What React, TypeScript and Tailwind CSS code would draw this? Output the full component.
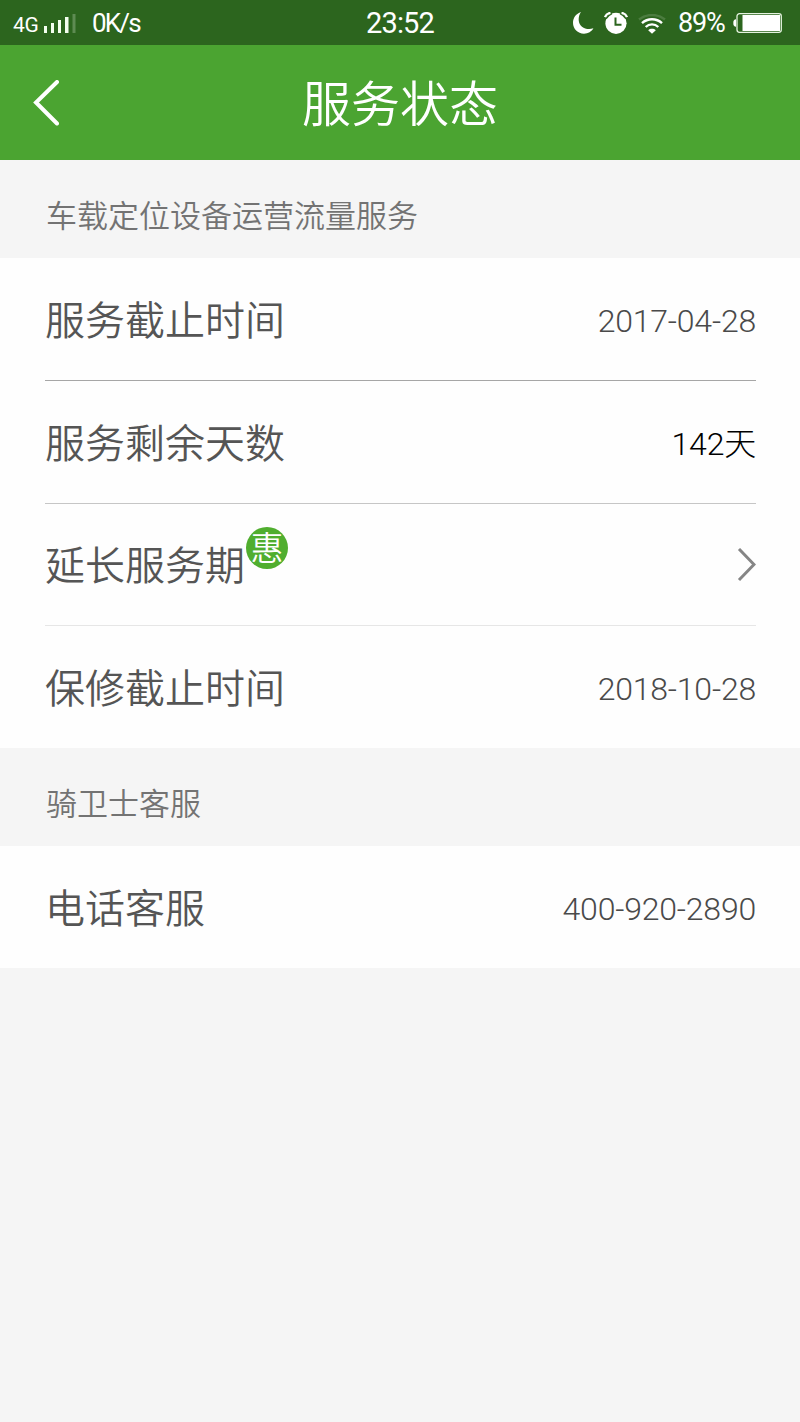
import React from 'react';
import clsx from 'clsx';

interface ServiceRow {
  label: string;
  value?: string;
  valueClass?: string;
  badge?: string;
  link?: boolean;
  rowClass: string;
  lineClass?: string;
}

const serviceRows: ServiceRow[] = [
  { label: '服务截止时间', value: '2017-04-28', rowClass: 'h-[123px]', lineClass: 'border-b border-[#a6a6a6]' },
  { label: '服务剩余天数', value: '142天', valueClass: 'text-black', rowClass: 'h-[123px]', lineClass: 'border-b border-[#c6c6c6]' },
  { label: '延长服务期', badge: '惠', link: true, rowClass: 'h-[122px]', lineClass: 'border-b border-[#e6e6e6]' },
  { label: '保修截止时间', value: '2018-10-28', rowClass: 'h-[122px]' },
];

const contactRows: ServiceRow[] = [
  { label: '电话客服', value: '400-920-2890', rowClass: 'h-[122px]' },
];

const SignalIcon = () => (
  <svg width="34" height="20" viewBox="0 0 34 20" fill="#f4fff0">
    <rect x="1" y="12" width="3" height="7" />
    <rect x="8" y="9" width="3" height="10" />
    <rect x="15" y="6" width="3" height="13" />
    <rect x="22" y="3" width="3.5" height="16" />
    <rect x="29.5" y="0" width="3" height="19" opacity="0.25" />
  </svg>
);

const MoonIcon = () => (
  <svg width="21" height="22" viewBox="0 0 21 22" fill="#fff">
    <path d="M8 0C3.2 1.6 0 5.8 0 10.8C0 17 4.8 21.7 11 21.7C15.200 21.700 18.600 19.500 20.400 16.300C13.500 18.800 6.200 15 5.700 8.200C5.500 5.100 6.400 2.200 8 0Z" />
  </svg>
);

const AlarmIcon = () => (
  <svg width="24" height="22" viewBox="0 0 24 22" fill="none">
    <circle cx="12" cy="11.3" r="10.6" fill="#fff" />
    <path d="M2.200 6.800C3.600 4.200 5.200 2.800 8 1.600M21.800 6.800C20.400 4.200 18.800 2.800 16 1.600" stroke="#2c651e" strokeWidth="1.300" />
    <path d="M1 5C1.800 2.800 3.600 1.200 6.500 .8M23 5C22.200 2.800 20.400 1.200 17.500 .8" stroke="#fff" strokeWidth="2.200" />
    <path d="M11.500 5.500V12.800H17.500" stroke="#2c651e" strokeWidth="2" />
  </svg>
);

const WifiIcon = () => (
  <svg width="28" height="20" viewBox="0 0 28 20" fill="none" strokeWidth="2.400">
    <path d="M1 5.500C8.500 -.5 19.500 -.5 27 5.500" stroke="#fff" opacity="0.15" />
    <path d="M4 9.200C9.700 4 18.300 4 24 9.200" stroke="#fff" />
    <path d="M7.700 13C11.300 9.500 16.700 9.500 20.300 13" stroke="#fff" />
    <path d="M10.200 16.200C12.400 14.300 15.600 14.300 17.800 16.200L14 19.700Z" fill="#fff" />
  </svg>
);

const BatteryIcon = () => (
  <svg width="49" height="20" viewBox="0 0 49 20" fill="none">
    <path d="M3 6.300C1.200 6.300 .3 7.500 .3 10S1.200 13.700 3 13.700Z" fill="#fff" />
    <rect x="4" y=".7" width="44.300" height="18.600" rx="2.500" stroke="#e4f2df" strokeWidth="1.300" />
    <rect x="9.500" y="2" width="37.500" height="16" fill="#fff" />
  </svg>
);

const StatusBar = () => (
  <div className="relative flex h-[45px] items-center justify-between bg-[#2c651e] pl-[13px] pr-[18px] font-normal text-white">
    <div className="flex items-center">
      <span className="w-[30px] pt-[5px] text-[21px] leading-none tracking-[-0.2px]">4G</span>
      <div className="pt-[2px]"><SignalIcon /></div>
      <span className="ml-[15px] pt-px text-[26px] leading-none tracking-[-1.8px]">0K/s</span>
    </div>
    <div className="absolute inset-x-0 top-[9px] text-center text-[29px] leading-[28px] tracking-[-0.8px]">23:52</div>
    <div className="flex items-center">
      <MoonIcon />
      <div className="ml-[10px]"><AlarmIcon /></div>
      <div className="ml-[10px] pt-[3px]"><WifiIcon /></div>
      <span className="ml-[12px] w-[50px] pt-[2px] text-[27px] leading-none tracking-[-1.2px]">89%</span>
      <div className="ml-[5px]"><BatteryIcon /></div>
    </div>
  </div>
);

const SectionTitle = ({ children }: { children: React.ReactNode }) => (
  <h2 className="flex h-[98px] items-center bg-[#f5f5f5] pl-[46px] pt-[10px] font-['Noto_Sans_CJK_SC',sans-serif] text-[31px] font-[350] leading-[46px] text-[#737373]">
    {children}
  </h2>
);

const Row = ({ row }: { row: ServiceRow }) => (
  <div className={clsx('flex items-center justify-between', row.rowClass, row.lineClass)}>
    <div className="relative pb-[3px] font-['Noto_Sans_CJK_SC',sans-serif] text-[40px] font-[350] leading-[60px] text-[#555]">
      {row.label}
      {row.badge && (
        <span className="absolute -right-[43px] top-[-6px] flex size-[42px] items-center justify-center rounded-full bg-[#50ae2f] pb-[3px] text-[33px] leading-none text-white">
          {row.badge}
        </span>
      )}
    </div>
    {row.value && (
      <span className={clsx('pt-[3px] text-[32px] tracking-[-0.2px]', row.valueClass ?? 'text-[#4a4a4a]')}>{row.value}</span>
    )}
    {row.link && (
      <svg width="19" height="34" viewBox="0 0 19 34" fill="none" stroke="#858585" strokeWidth="3">
        <path d="M2 1L17 16.500L2 32" />
      </svg>
    )}
  </div>
);

export default function App() {
  return (
    <div className="min-h-screen bg-[#f5f5f5] font-['Roboto','Noto_Sans_CJK_SC',sans-serif] font-light">
      <StatusBar />
      <header className="relative flex h-[115px] items-center justify-center bg-[#4ba431] text-white">
        <svg className="absolute left-[33px] top-[35px]" width="26" height="46" viewBox="0 0 26 46" fill="none" stroke="#fff" strokeWidth="4">
          <path d="M24 2L3 22.500L24 43.500" strokeLinecap="round" />
        </svg>
        <h1 className="pb-[5px] font-['Noto_Sans_CJK_SC',sans-serif] text-[49px] font-[350] leading-none">服务状态</h1>
      </header>
      <SectionTitle>车载定位设备运营流量服务</SectionTitle>
      <div className="bg-[#fefefe] pl-[45px] pr-[44px]">
        {serviceRows.map((row) => <Row key={row.label} row={row} />)}
      </div>
      <SectionTitle>骑卫士客服</SectionTitle>
      <div className="bg-[#fefefe] pl-[45px] pr-[44px]">
        {contactRows.map((row) => <Row key={row.label} row={row} />)}
      </div>
    </div>
  );
}
